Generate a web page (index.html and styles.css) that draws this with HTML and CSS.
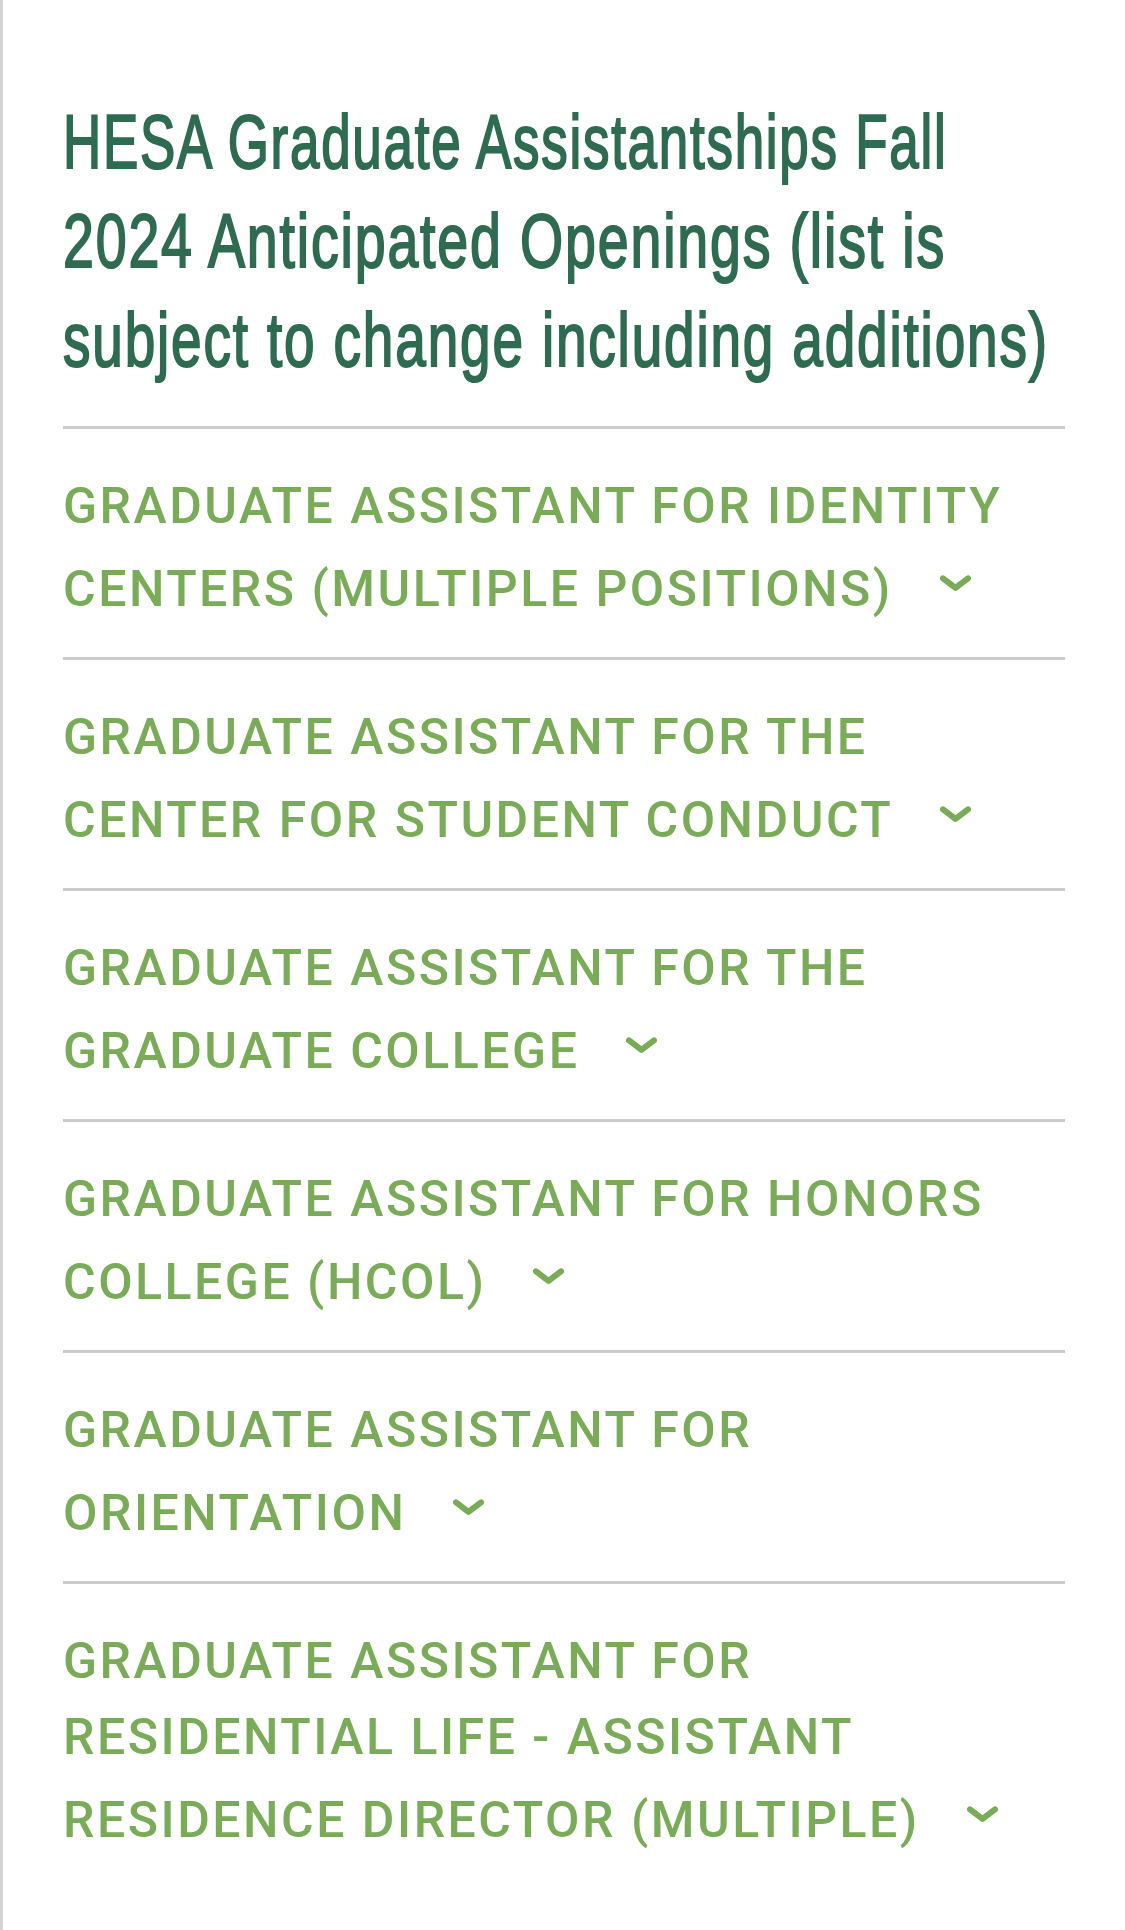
FILE: index.html
```html
<!DOCTYPE html>
<html lang="en">
<head>
<meta charset="utf-8">
<title>HESA Graduate Assistantships</title>
<link rel="stylesheet" href="styles.css">
</head>
<body>
<div class="page">
  <h1 class="title"><span class="title-line line-1">HESA Graduate Assistantships Fall</span> <span class="title-line line-2">2024 Anticipated Openings (list is</span> <span class="title-line line-3">subject to change including additions)</span></h1>
  <ul class="accordion">
    <li class="item"><a class="item-link">Graduate Assistant for Identity Centers (Multiple Positions)<span class="chev"><svg width="31" height="62" viewBox="0 0 31 62"><polyline points="3,34.3 15.5,43.9 28,34.3"/></svg></span></a></li>
    <li class="item"><a class="item-link">Graduate Assistant for the Center for Student Conduct<span class="chev"><svg width="31" height="62" viewBox="0 0 31 62"><polyline points="3,34.3 15.5,43.9 28,34.3"/></svg></span></a></li>
    <li class="item"><a class="item-link">Graduate Assistant for the Graduate College<span class="chev"><svg width="31" height="62" viewBox="0 0 31 62"><polyline points="3,34.3 15.5,43.9 28,34.3"/></svg></span></a></li>
    <li class="item"><a class="item-link">Graduate Assistant for Honors College (HCOL)<span class="chev"><svg width="31" height="62" viewBox="0 0 31 62"><polyline points="3,34.3 15.5,43.9 28,34.3"/></svg></span></a></li>
    <li class="item"><a class="item-link">Graduate Assistant for Orientation<span class="chev"><svg width="31" height="62" viewBox="0 0 31 62"><polyline points="3,34.3 15.5,43.9 28,34.3"/></svg></span></a></li>
    <li class="item"><a class="item-link">Graduate Assistant for Residential Life - Assistant Residence Director (Multiple)<span class="chev"><svg width="31" height="62" viewBox="0 0 31 62"><polyline points="3,34.3 15.5,43.9 28,34.3"/></svg></span></a></li>
  </ul>
</div>
</body>
</html>
```
FILE: styles.css
```css
html, body {
  margin: 0;
  padding: 0;
  background: #ffffff;
}

body {
  overflow: hidden;
}

.page {
  box-sizing: border-box;
  min-height: 1930px;
  border-left: 3px solid #d3d3d3;
  padding: 93px 60px 0 60px;
  overflow: hidden;
}

.title {
  margin: 0;
  font-family: "Liberation Sans", Arial, sans-serif;
  font-weight: 400;
  font-size: 75.4px;
  line-height: 99px;
  letter-spacing: 2.5px;
  color: #2e6b51;
  -webkit-text-stroke: 2px #2e6b51;
}

.title-line {
  display: block;
  white-space: nowrap;
  transform-origin: 0 0;
}

.line-1 {
  transform: scaleX(0.702);
}

.line-2 {
  transform: scaleX(0.736);
}

.line-3 {
  transform: scaleX(0.729);
}

.accordion {
  list-style: none;
  margin: 36px 0 0 0;
  padding: 0;
}

.item {
  border-top: 3px solid #cbcbcb;
  padding: 39px 0 30px 0;
}

.item-link {
  font-family: Roboto, "Liberation Sans", sans-serif;
  font-weight: 500;
  font-size: 50px;
  line-height: 76px;
  letter-spacing: 2.5px;
  text-transform: uppercase;
  color: #7aab58;
  text-decoration: none;
}

.chev {
  display: inline-block;
  width: 31px;
  height: 62px;
  margin-left: 47px;
  vertical-align: baseline;
  overflow: hidden;
}

.chev svg {
  display: block;
}

.chev polyline {
  fill: none;
  stroke: #7aab58;
  stroke-width: 6;
  stroke-linecap: round;
  stroke-linejoin: round;
}
```
